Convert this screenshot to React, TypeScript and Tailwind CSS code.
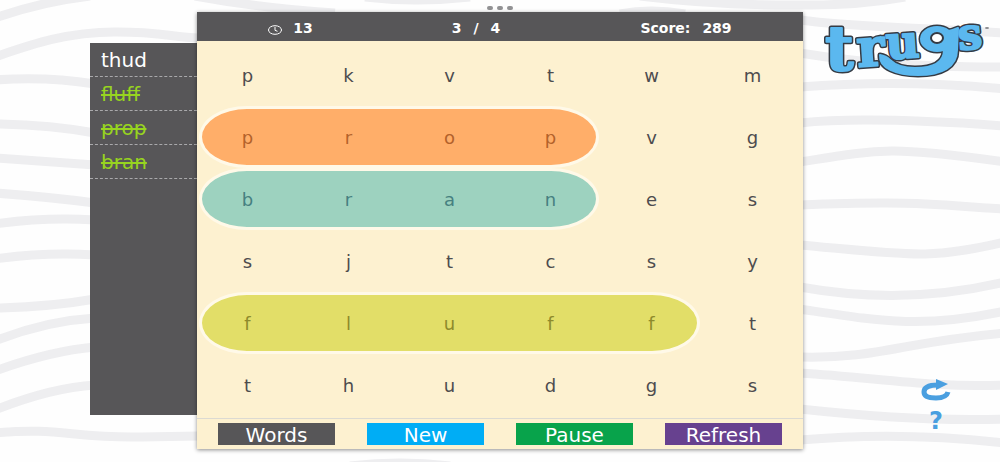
import React from 'react';

const words = [
  { text: 'thud', found: false },
  { text: 'fluff', found: true },
  { text: 'prop', found: true },
  { text: 'bran', found: true },
];

// mark: pill drawn behind the found word, letter: text colour inside the pill
const rows = [
  { letters: 'pkvtwm', found: 0, mark: '', letter: '' },
  { letters: 'propvg', found: 4, mark: 'col-span-4 bg-[#ffae69]', letter: 'text-[#b3622b]' },
  { letters: 'branes', found: 4, mark: 'col-span-4 bg-[#9dd2bf]', letter: 'text-[#468080]' },
  { letters: 'sjtcsy', found: 0, mark: '', letter: '' },
  { letters: 'flufft', found: 5, mark: 'col-span-5 bg-[#e2de68]', letter: 'text-[#8e8a2c]' },
  { letters: 'thudgs', found: 0, mark: '', letter: '' },
];

const columns = [
  'col-start-1',
  'col-start-2',
  'col-start-3',
  'col-start-4',
  'col-start-5',
  'col-start-6',
];

const actions = [
  { label: 'Words', color: 'bg-[#575658]' },
  { label: 'New', color: 'bg-[#00adf5]' },
  { label: 'Pause', color: 'bg-[#08a34b]' },
  { label: 'Refresh', color: 'bg-[#67418f]' },
];

const waves = [
  'M-5 18Q40 2 90 -4',
  'M-5 57C30 45 66 32 115 32S170 37 200 38',
  'M-5 80Q45 76 95 84',
  'M-5 124Q50 125 95 133',
  'M-5 158Q40 161 95 165',
  'M-5 193Q50 197 95 203',
  'M-5 224Q45 217 95 220',
  'M-5 259Q45 252 95 255',
  'M-5 308Q50 307 95 299',
  'M-5 341Q45 321 95 318',
  'M-5 371Q50 351 95 347',
  'M-5 410Q50 388 95 385',
  'M-5 433C60 427 70 438 140 437L200 436',
  'M195 -4Q260 8 335 13',
  'M365 -3Q415 3 470 -3',
  'M620 14Q650 8 685 14',
  'M640 -4Q720 6 810 5Q860 5 905 -3',
  'M800 20C850 27 910 27 1005 33',
  'M800 53C850 61 900 67 1005 67',
  'M800 87Q900 79 1005 89',
  'M800 123Q865 116 1005 126',
  'M800 162C880 149 890 146 1005 162',
  'M800 205C930 200 940 206 1005 209',
  'M800 245C910 255 930 260 1005 242',
  'M800 287Q905 306 1005 282',
  'M800 309C880 321 920 329 1005 311',
  'M800 357C880 359 900 342 1005 333',
  'M800 373C880 378 930 388 1005 385',
  'M800 409Q920 422 1005 419',
  'M800 440Q900 431 1005 443',
  'M350 466Q400 460 450 466',
];

function Waves() {
  return (
    <svg
      className="absolute inset-0 -z-10 h-full w-full"
      viewBox="0 0 1000 462"
      preserveAspectRatio="none"
      fill="none"
      stroke="#eeeef0"
      strokeWidth="9"
      aria-hidden="true"
    >
      {waves.map((d) => (
        <path key={d} d={d} />
      ))}
    </svg>
  );
}

// The tail of the g runs back under the word as a smile
function LogoShapes() {
  return (
    <>
      <text x="2" y="46" fontSize="62">t</text>
      <text x="34" y="42" fontSize="53" transform="rotate(-4 48 30)">r</text>
      <text x="63" y="34" fontSize="46" transform="rotate(-4 80 24)">u</text>
      <path d="M57 31Q63 32 67 36C73 42 80 44 92 44C110 44 121 38 121 26V8Q129 7 135 4L134 26C134 43 119 51 95 51C73 51 56 44 57 31Z" />
      <ellipse cx="114" cy="15" rx="16" ry="12" />
      <text x="135" y="25" fontSize="43" transform="rotate(-5 148 14)">s</text>
    </>
  );
}

function Logo() {
  return (
    <svg
      className="ml-5 w-[168px] max-w-full overflow-visible"
      viewBox="0 0 168 56"
      fontFamily="'DejaVu Serif', serif"
      fontWeight="bold"
      role="img"
      aria-label="trugs"
    >
      <g fill="#353b44" stroke="#353b44" strokeWidth="5" strokeLinejoin="round">
        <LogoShapes />
      </g>
      <g fill="#5bb8ef" stroke="#5bb8ef" strokeWidth="2" strokeLinejoin="round">
        <LogoShapes />
      </g>
      <ellipse cx="114" cy="14" rx="6" ry="5" fill="#fff" stroke="#353b44" strokeWidth="2" />
      <ellipse cx="164" cy="4" rx="2" ry="1" fill="#88888c" />
    </svg>
  );
}

function ClockIcon() {
  return (
    <svg className="h-3 w-4" viewBox="0 0 16 12" fill="none" stroke="#fff" aria-hidden="true">
      <ellipse cx="8" cy="6" rx="6.5" ry="4.3" />
      <path d="M8 3V6.3L10.5 7.3" />
    </svg>
  );
}

function StatusBar() {
  return (
    <header className="grid h-[29px] grid-cols-3 items-center bg-[#575658] pt-0.5 text-sm leading-6 font-bold text-white">
      <div className="flex items-center justify-center gap-2.5 pr-4">
        <span className="pt-1">
          <ClockIcon />
        </span>
        <span>13</span>
      </div>
      <div className="flex justify-center gap-3 pr-12">
        <span>3</span>
        <span>/</span>
        <span>4</span>
      </div>
      <div className="flex justify-center gap-3 pr-8">
        <span>Score:</span>
        <span>289</span>
      </div>
    </header>
  );
}

function Board() {
  return (
    <div className="pt-[3px] pb-[2px] text-[#4d4c4e]">
      {rows.map((row, r) => (
        <div key={r} className="grid h-[62px] grid-cols-6 text-lg leading-6">
          {row.found > 0 && (
            <div
              className={`col-start-1 row-start-1 mx-[2px] rounded-[48px/31px] border-[3px] border-[#fff9e8] ${row.mark}`}
            />
          )}
          {row.letters.split('').map((letter, c) => (
            <span
              key={c}
              className={`row-start-1 self-center pt-0.5 text-center ${columns[c]} ${c < row.found ? row.letter : ''}`}
            >
              {letter}
            </span>
          ))}
        </div>
      ))}
    </div>
  );
}

export default function App() {
  return (
    <div className="relative isolate min-h-screen overflow-hidden bg-[#fefefe] font-['DejaVu_Sans',sans-serif]">
      <Waves />

      {/* Window handle */}
      <div className="flex h-3 items-center justify-center gap-1 pt-1">
        <i className="h-1 w-1.5 rounded-full bg-[#929294]" />
        <i className="h-1 w-1.5 rounded-full bg-[#929294]" />
        <i className="h-1 w-1.5 rounded-full bg-[#929294]" />
      </div>

      <div className="grid grid-cols-[9%_10.7%_60.6%_19.7%]">
        {/* Word list */}
        <aside className="col-start-2 mt-[31px] mb-[34px] bg-[#575658]">
          <ul>
            {words.map((word) => (
              <li
                key={word.text}
                className={`border-b border-dashed border-[#a9a9ab] pt-[5px] pb-1 pl-[11px] text-xl leading-6 ${
                  word.found ? 'text-[#97d420] line-through' : 'text-white'
                }`}
              >
                {word.text}
              </li>
            ))}
          </ul>
        </aside>

        {/* Puzzle */}
        <main className="bg-[#fdf1d0] shadow-[0_1px_4px_rgba(0,0,0,0.45)]">
          <StatusBar />
          <Board />
          <footer className="flex gap-8 border-t border-[#dcdad2] px-[21px] py-1">
            {actions.map((action) => (
              <button
                key={action.label}
                type="button"
                className={`h-[22px] flex-1 text-xl leading-6 text-white ${action.color}`}
              >
                {action.label}
              </button>
            ))}
          </footer>
        </main>

        <div className="flex flex-col justify-between pt-3 pb-4">
          <Logo />
          <div className="mr-12 flex flex-col items-center gap-1.5 self-end text-[#4a9fe0]">
            <button type="button" aria-label="Restart" className="h-6 w-8">
              <svg className="h-6 w-8" viewBox="0 0 32 24" fill="none" aria-hidden="true">
                <path
                  d="M28 13C27 17 22 19 16 19C9 19 4 17 4 13C4 8 9 6 18 6"
                  stroke="currentColor"
                  strokeWidth="5"
                />
                <path d="M16 0L28 5L16 11Z" fill="currentColor" />
              </svg>
            </button>
            <button type="button" aria-label="Help" className="w-8 text-2xl leading-6 font-bold">
              ?
            </button>
          </div>
        </div>
      </div>
    </div>
  );
}
